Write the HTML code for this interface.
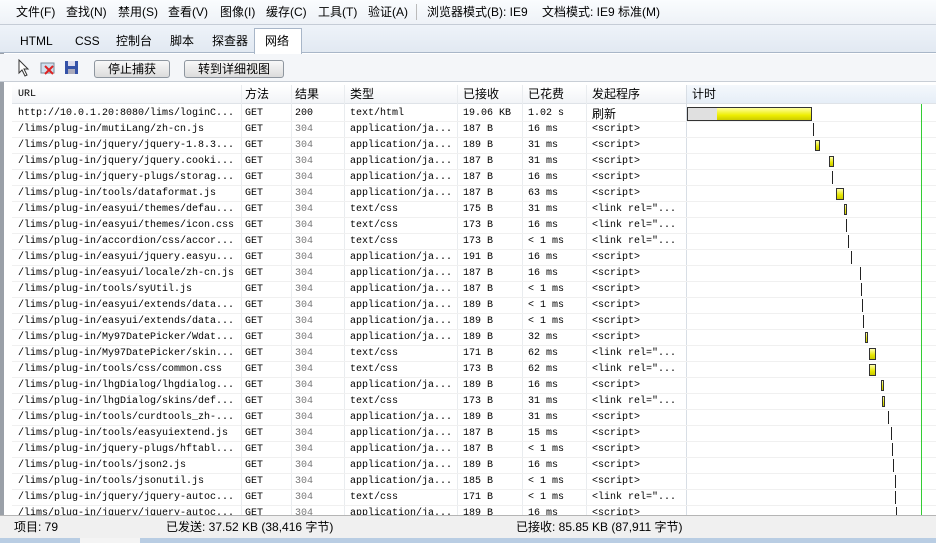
<!DOCTYPE html><html><head><meta charset="utf-8"><style>
*{margin:0;padding:0;box-sizing:border-box}
body{width:936px;height:543px;overflow:hidden;background:#fff;font-family:"Liberation Sans","Noto Sans CJK SC",sans-serif;font-size:12px;color:#000;position:relative}
.abs{position:absolute}
#menu{left:0;top:0;width:936px;height:25px;background:linear-gradient(#fafcfe,#eef2f7);border-bottom:1px solid #c5ccd6}
#menu span{position:absolute;top:4px;font-size:12px;line-height:16px}
#tabs{left:0;top:25px;width:936px;height:28px;background:linear-gradient(#eef3f9,#e2e9f2);border-bottom:1px solid #a8b6c8}
#tabs span{position:absolute;top:8px;font-size:12px;line-height:16px}
#tb{left:0;top:54px;width:936px;height:28px;background:#f4f6f9;border-bottom:1px solid #c8ced6}
.btn{position:absolute;top:6px;height:18px;border:1px solid #8e969f;border-radius:3px;background:linear-gradient(#f8f8f8,#dcdcdc);font-size:12px;text-align:center;line-height:16px}
#hdr{left:12px;top:85px;width:924px;height:19px;background:linear-gradient(#fff,#f2f4f7);border-bottom:1px solid #dfe3e8}
#hdr span{position:absolute;top:1px;font-size:12px;line-height:16px}
.sep{position:absolute;top:85px;width:1px;height:430px;background:#e9ecef}
.row{position:absolute;left:12px;width:924px;height:16px;border-bottom:1px solid #f0f0f0;font-family:"Liberation Mono","Noto Sans CJK SC",monospace;font-size:10px;line-height:16px}
.row span{position:absolute;top:0;white-space:nowrap}
.g{color:#777}
#status{left:0;top:515px;width:936px;height:23px;background:#f0f0f0;border-top:1px solid #b5b5b5;font-size:12px}
#status span{position:absolute;top:3px;line-height:16px}
.bar{position:absolute;border:1px solid #333;background:linear-gradient(#ffffb0,#e6e600 60%,#c8c800)}
</style></head><body>
<div class="abs" style="left:0;top:0;width:4px;height:543px;background:#9aa0a8"></div>
<div id="menu" class="abs">
<span style="left:16px">文件(F)</span><span style="left:66px">查找(N)</span><span style="left:118px">禁用(S)</span><span style="left:168px">查看(V)</span><span style="left:220px">图像(I)</span><span style="left:266px">缓存(C)</span><span style="left:318px">工具(T)</span><span style="left:368px">验证(A)</span>
<span style="left:416px;top:4px;width:1px;height:16px;background:#bbb"></span>
<span style="left:427px">浏览器模式(B): IE9</span><span style="left:542px">文档模式: IE9 标准(M)</span></div>
<div id="tabs" class="abs">
<span style="left:20px">HTML</span><span style="left:75px">CSS</span><span style="left:116px">控制台</span><span style="left:170px">脚本</span><span style="left:212px">探查器</span>
<div style="position:absolute;left:254px;top:3px;width:48px;height:26px;background:#fff;border:1px solid #a8b6c8;border-bottom:none"></div>
<span style="left:265px">网络</span></div>
<div id="tb" class="abs">
<svg style="position:absolute;left:17px;top:5px" width="16" height="18"><path d="M2 1 L2 14 L5 11 L8 17 L10 16 L7 10 L11 10 Z" fill="#fff" stroke="#333"/></svg>
<svg style="position:absolute;left:40px;top:6px" width="16" height="16"><rect x="1" y="3" width="13" height="10" fill="#cfe0ee" stroke="#7a8a99"/><path d="M5 6 L13 14 M13 6 L5 14" stroke="#d22" stroke-width="2"/></svg>
<svg style="position:absolute;left:64px;top:6px" width="16" height="16"><rect x="1" y="1" width="13" height="13" fill="#3552a8"/><rect x="4" y="1" width="7" height="5" fill="#dde"/><rect x="4" y="9" width="7" height="5" fill="#aab"/></svg>
<div class="btn" style="left:94px;width:76px">停止捕获</div>
<div class="btn" style="left:184px;width:100px">转到详细视图</div></div>
<div id="hdr" class="abs">
<div style="position:absolute;left:674px;top:0;width:250px;height:18px;background:linear-gradient(#f4f8fc,#e6eef7);border-left:1px solid #9fb4cc"></div>
<span style="left:6px;font-family:'Liberation Mono',monospace;font-size:10px;top:2px">URL</span><span style="left:233px">方法</span><span style="left:283px">结果</span><span style="left:338px">类型</span><span style="left:451px">已接收</span><span style="left:516px">已花费</span><span style="left:580px">发起程序</span>
<span style="left:680px">计时</span></div>
<div class="sep" style="left:241px"></div><div class="sep" style="left:291px"></div><div class="sep" style="left:344px"></div><div class="sep" style="left:457px"></div><div class="sep" style="left:522px"></div><div class="sep" style="left:586px"></div><div class="sep" style="left:686px;background:#d8dee5"></div>
<div id="rows"></div>
<div class="abs" style="left:921px;top:104px;width:1px;height:411px;background:#3c3"></div>
<div id="status" class="abs"><span style="left:14px">项目: 79</span><span style="left:166px">已发送: 37.52 KB (38,416 字节)</span><span style="left:516px">已接收: 85.85 KB (87,911 字节)</span></div>
<div class="abs" style="left:0;top:538px;width:936px;height:5px;background:#b9cde3"></div>
<div class="abs" style="left:80px;top:538px;width:60px;height:5px;background:#f4f4f4"></div>
<script>
var d=[
["http://10.0.1.20:8080/lims/loginC...","200","text/html","19.06 KB","1.02 s","刷新"],
["/lims/plug-in/mutiLang/zh-cn.js","304","application/ja...","187 B","16 ms","<script>"],
["/lims/plug-in/jquery/jquery-1.8.3...","304","application/ja...","189 B","31 ms","<script>"],
["/lims/plug-in/jquery/jquery.cooki...","304","application/ja...","187 B","31 ms","<script>"],
["/lims/plug-in/jquery-plugs/storag...","304","application/ja...","187 B","16 ms","<script>"],
["/lims/plug-in/tools/dataformat.js","304","application/ja...","187 B","63 ms","<script>"],
["/lims/plug-in/easyui/themes/defau...","304","text/css","175 B","31 ms","<link rel=\"..."],
["/lims/plug-in/easyui/themes/icon.css","304","text/css","173 B","16 ms","<link rel=\"..."],
["/lims/plug-in/accordion/css/accor...","304","text/css","173 B","< 1 ms","<link rel=\"..."],
["/lims/plug-in/easyui/jquery.easyu...","304","application/ja...","191 B","16 ms","<script>"],
["/lims/plug-in/easyui/locale/zh-cn.js","304","application/ja...","187 B","16 ms","<script>"],
["/lims/plug-in/tools/syUtil.js","304","application/ja...","187 B","< 1 ms","<script>"],
["/lims/plug-in/easyui/extends/data...","304","application/ja...","189 B","< 1 ms","<script>"],
["/lims/plug-in/easyui/extends/data...","304","application/ja...","189 B","< 1 ms","<script>"],
["/lims/plug-in/My97DatePicker/Wdat...","304","application/ja...","189 B","32 ms","<script>"],
["/lims/plug-in/My97DatePicker/skin...","304","text/css","171 B","62 ms","<link rel=\"..."],
["/lims/plug-in/tools/css/common.css","304","text/css","173 B","62 ms","<link rel=\"..."],
["/lims/plug-in/lhgDialog/lhgdialog...","304","application/ja...","189 B","16 ms","<script>"],
["/lims/plug-in/lhgDialog/skins/def...","304","text/css","173 B","31 ms","<link rel=\"..."],
["/lims/plug-in/tools/curdtools_zh-...","304","application/ja...","189 B","31 ms","<script>"],
["/lims/plug-in/tools/easyuiextend.js","304","application/ja...","187 B","15 ms","<script>"],
["/lims/plug-in/jquery-plugs/hftabl...","304","application/ja...","187 B","< 1 ms","<script>"],
["/lims/plug-in/tools/json2.js","304","application/ja...","189 B","16 ms","<script>"],
["/lims/plug-in/tools/jsonutil.js","304","application/ja...","185 B","< 1 ms","<script>"],
["/lims/plug-in/jquery/jquery-autoc...","304","text/css","171 B","< 1 ms","<link rel=\"..."],
["/lims/plug-in/jquery/jquery-autoc...","304","application/ja...","189 B","16 ms","<script>"]];
var bars=[[0,0],[813,1],[815,4],[829,4],[832,1],[836,7],[844,2],[846,1],[848,1],[851,1],[860,1],[861,1],[862,1],[863,1],[865,2],[869,6],[869,6],[881,2],[882,2],[888,1],[891,1],[892,1],[893,1],[895,1],[895,1],[896,1]];
function esc(s){return s.replace(/&/g,'&amp;').replace(/</g,'&lt;').replace(/>/g,'&gt;')}
var h='';
d.forEach(function(r,i){var t=106+i*16;
h+='<div class="row" style="top:'+t+'px"><span style="left:6px">'+esc(r[0])+'</span><span style="left:233px">GET</span><span style="left:283px" class="'+(i?'g':'')+'">'+r[1]+'</span><span style="left:338px">'+r[2]+'</span><span style="left:451px">'+r[3]+'</span><span style="left:516px">'+esc(r[4])+'</span><span style="left:580px;'+(i?'':'font-family:Liberation Sans,Noto Sans CJK SC;font-size:12px')+'">'+esc(r[5])+'</span></div>';
var b=bars[i];
if(i==0){h+='<div class="abs" style="left:687px;top:'+(t+1)+'px;width:125px;height:14px;border:1px solid #333;background:#e0e0e0;"><div style="position:absolute;left:29px;top:0;right:0;bottom:0;background:linear-gradient(#ffffa0,#eeee00 60%,#cccc00)"></div></div>';}
else if(b[1]<=1){h+='<div class="abs" style="left:'+b[0]+'px;top:'+(t+1)+'px;width:1px;height:13px;background:#222"></div>';}
else{h+='<div class="bar" style="left:'+b[0]+'px;top:'+(t+2)+'px;width:'+(b[1]+1)+'px;height:'+(b[1]>4?12:11)+'px"></div>';}
});
document.getElementById('rows').innerHTML=h;
</script>
</body></html>
